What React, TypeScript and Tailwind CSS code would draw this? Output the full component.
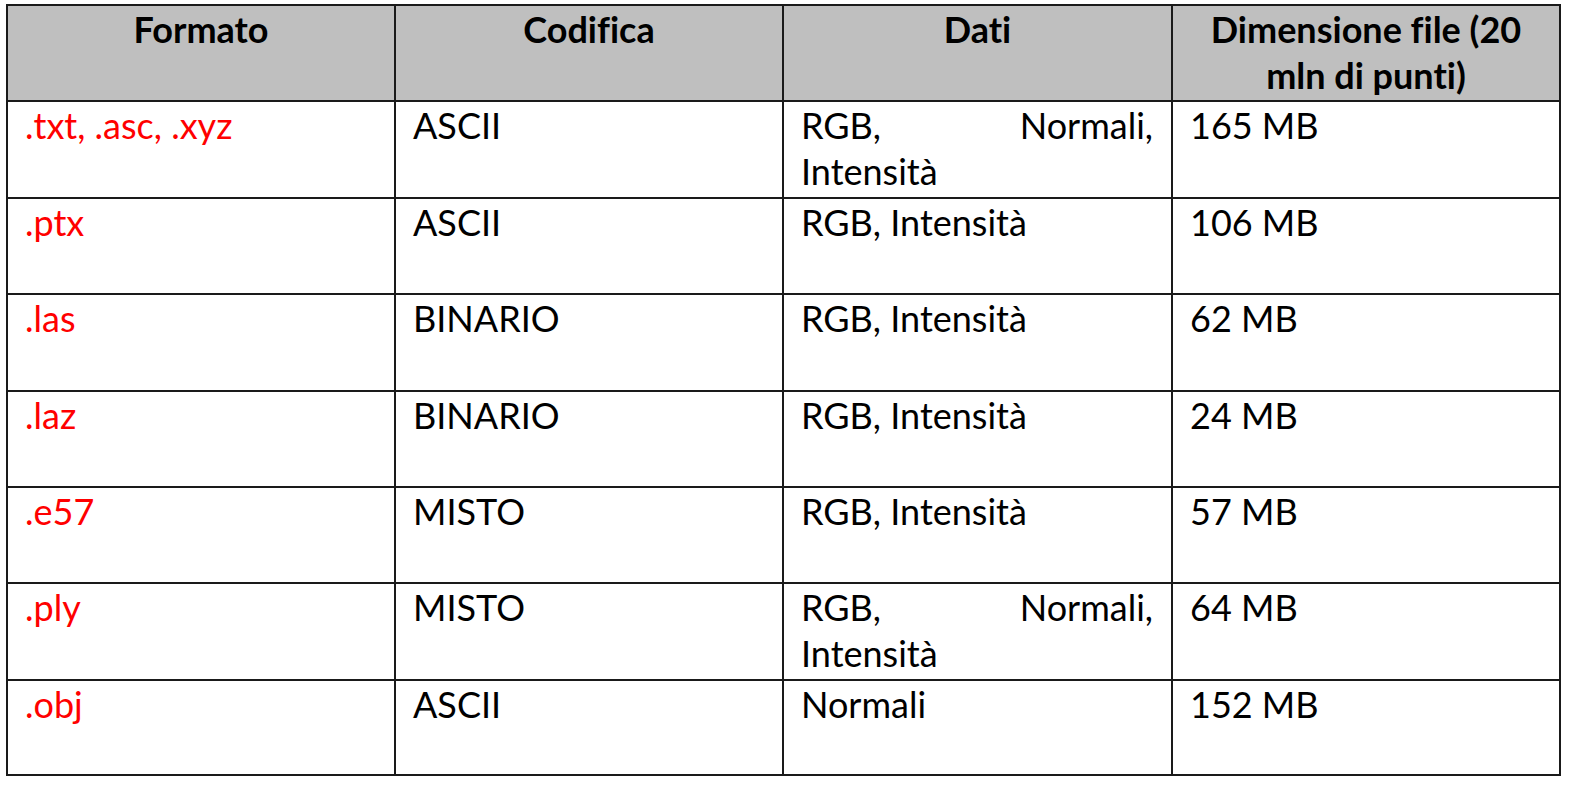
import React from "react";

const rows: { h: string; c: [string, string, string, string] }[] = [
  { h: "h-[97px]", c: [".txt, .asc, .xyz", "ASCII", "RGB, Normali, Intensità", "165 MB"] },
  { h: "h-[96px]", c: [".ptx", "ASCII", "RGB, Intensità", "106 MB"] },
  { h: "h-[97px]", c: [".las", "BINARIO", "RGB, Intensità", "62 MB"] },
  { h: "h-[96px]", c: [".laz", "BINARIO", "RGB, Intensità", "24 MB"] },
  { h: "h-[96px]", c: [".e57", "MISTO", "RGB, Intensità", "57 MB"] },
  { h: "h-[97px]", c: [".ply", "MISTO", "RGB, Normali, Intensità", "64 MB"] },
  { h: "h-[95px]", c: [".obj", "ASCII", "Normali", "152 MB"] },
];

const headers = ["Formato", "Codifica", "Dati", "Dimensione file (20 mln di punti)"];

export default function App() {
  return (
    <div className="w-[1569px] h-[788px] bg-white overflow-hidden pt-[4px] pl-[6px]" style={{ fontFamily: "Lato, 'Open Sans', sans-serif" }}>
      <div className="grid grid-cols-[388px_388px_389px_388px] border-l-2 border-t-2 border-[#1a1a1a] w-[1555px] text-[36px] leading-[46px] text-black [font-variant-ligatures:none]">
        {headers.map((h, i) => (
          <div key={i} className="h-[96px] border-r-2 border-b-2 border-[#1a1a1a] bg-[#bfbfbf] font-bold text-center px-[14px]">
            {h}
          </div>
        ))}
        {rows.map((r, ri) => (
          <React.Fragment key={ri}>
            <div className={`${r.h} border-r-2 border-b-2 border-[#1a1a1a] pl-[17px] pr-[18px] text-[#ff0000]`}>{r.c[0]}</div>
            <div className={`${r.h} border-r-2 border-b-2 border-[#1a1a1a] pl-[17px] pr-[18px]`}>{r.c[1]}</div>
            <div className={`${r.h} border-r-2 border-b-2 border-[#1a1a1a] pl-[17px] pr-[18px] text-justify`}>{r.c[2]}</div>
            <div className={`${r.h} border-r-2 border-b-2 border-[#1a1a1a] pl-[17px] pr-[18px]`}>{r.c[3]}</div>
          </React.Fragment>
        ))}
      </div>
    </div>
  );
}
